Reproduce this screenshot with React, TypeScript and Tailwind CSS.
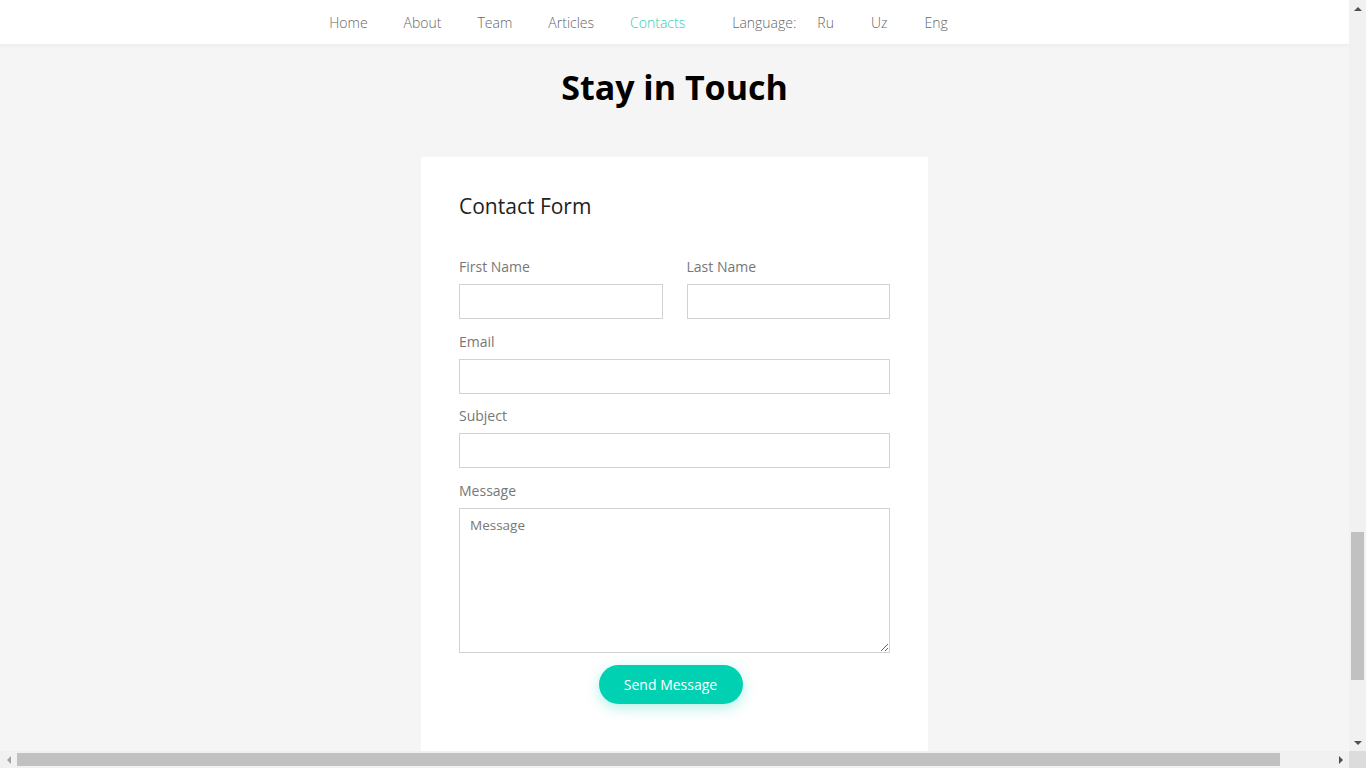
import React from 'react';

const navLinks = ['Home', 'About', 'Team', 'Articles', 'Contacts'];
const languages = ['Ru', 'Uz', 'Eng'];

const font = { fontFamily: '"Open Sans", "Liberation Sans", sans-serif' };

const Header: React.FC = () => (
  <header className="h-11 shrink-0 bg-white shadow-[0_2px_4px_rgba(0,0,0,0.04)] flex items-center justify-center">
    <nav className="flex items-center text-[14px] font-light text-[#666] mr-[72px]">
      <div className="flex items-center gap-[36px]">
        {navLinks.map((link) => (
          <a key={link} className={link === 'Contacts' ? 'text-[#33cdb4]' : ''}>
            {link}
          </a>
        ))}
      </div>
      <div className="flex items-center ml-[47px]">
        <span className="mr-[21px]">Language:</span>
        <div className="flex items-center gap-[37px]">
          {languages.map((lang) => (
            <a key={lang}>{lang}</a>
          ))}
        </div>
      </div>
    </nav>
  </header>
);

const Field: React.FC<{ label: string; className?: string }> = ({ label, className }) => (
  <div className={className}>
    <label className="block h-[18px] leading-[18px] mb-[8px] text-[14px] text-[#777]">{label}</label>
    <input
      type="text"
      className="block w-full h-[35px] border border-[#d2d2d2] bg-white px-3 text-[13px] outline-none"
    />
  </div>
);

const ContactForm: React.FC = () => (
  <div className="w-[507px] bg-white px-[38px] pt-[36px]">
    <h3 className="text-[21px] leading-[26px] text-[#222]">Contact Form</h3>
    <div className="mt-[39px] grid grid-cols-2 gap-x-[24px]">
      <Field label="First Name" />
      <Field label="Last Name" />
    </div>
    <Field label="Email" className="mt-[14px]" />
    <Field label="Subject" className="mt-[13px]" />
    <div className="mt-[14px]">
      <label className="block h-[18px] leading-[18px] mb-[8px] text-[14px] text-[#777]">Message</label>
      <textarea
        placeholder="Message"
        className="block w-full h-[145px] border border-[#d2d2d2] bg-white px-[10px] py-[6px] text-[13.5px] text-[#555] placeholder:text-[#777] outline-none"
      />
    </div>
    <div className="flex justify-center mt-[12px] pr-[8px]">
      <button className="h-[39px] w-[144px] rounded-full bg-[#00d1b3] text-white text-[14px] shadow-[0_4px_14px_rgba(0,209,179,0.3)]">
        Send Message
      </button>
    </div>
  </div>
);

const VerticalScrollbar: React.FC = () => (
  <div className="w-[17px] shrink-0 bg-[#f1f1f1] flex flex-col items-center">
    <div className="h-[17px] flex items-center justify-center">
      <div className="w-0 h-0 border-x-[4px] border-x-transparent border-b-[4px] border-b-[#505050]" />
    </div>
    <div className="flex-1 w-full px-[2px] flex flex-col">
      <div className="h-[515px]" />
      <div className="h-[148px] bg-[#c1c1c1]" />
    </div>
    <div className="h-[17px] flex items-center justify-center">
      <div className="w-0 h-0 border-x-[4px] border-x-transparent border-t-[4px] border-t-[#505050]" />
    </div>
  </div>
);

const HorizontalScrollbar: React.FC = () => (
  <div className="h-[17px] shrink-0 flex">
    <div className="flex-1 bg-[#f1f1f1] flex items-center">
      <div className="w-[17px] h-full flex items-center justify-center">
        <div className="w-0 h-0 border-y-[4px] border-y-transparent border-r-[4px] border-r-[#a3a3a3]" />
      </div>
      <div className="w-[1263px] h-[13px] bg-[#c1c1c1]" />
      <div className="flex-1" />
      <div className="w-[17px] h-full flex items-center justify-center">
        <div className="w-0 h-0 border-y-[4px] border-y-transparent border-l-[4px] border-l-[#505050]" />
      </div>
    </div>
    <div className="w-[17px] bg-[#dcdcdc]" />
  </div>
);

export default function App() {
  return (
    <div className="w-[1366px] h-[768px] overflow-hidden flex flex-col" style={font}>
      <div className="flex-1 flex min-h-0">
        <main className="flex-1 bg-[#f5f5f5] flex flex-col">
          <Header />
          <h2 className="mt-[23px] text-center text-[34px] leading-[40px] font-bold text-black">Stay in Touch</h2>
          <div className="mt-[50px] flex-1 flex justify-center">
            <ContactForm />
          </div>
        </main>
        <VerticalScrollbar />
      </div>
      <HorizontalScrollbar />
    </div>
  );
}
